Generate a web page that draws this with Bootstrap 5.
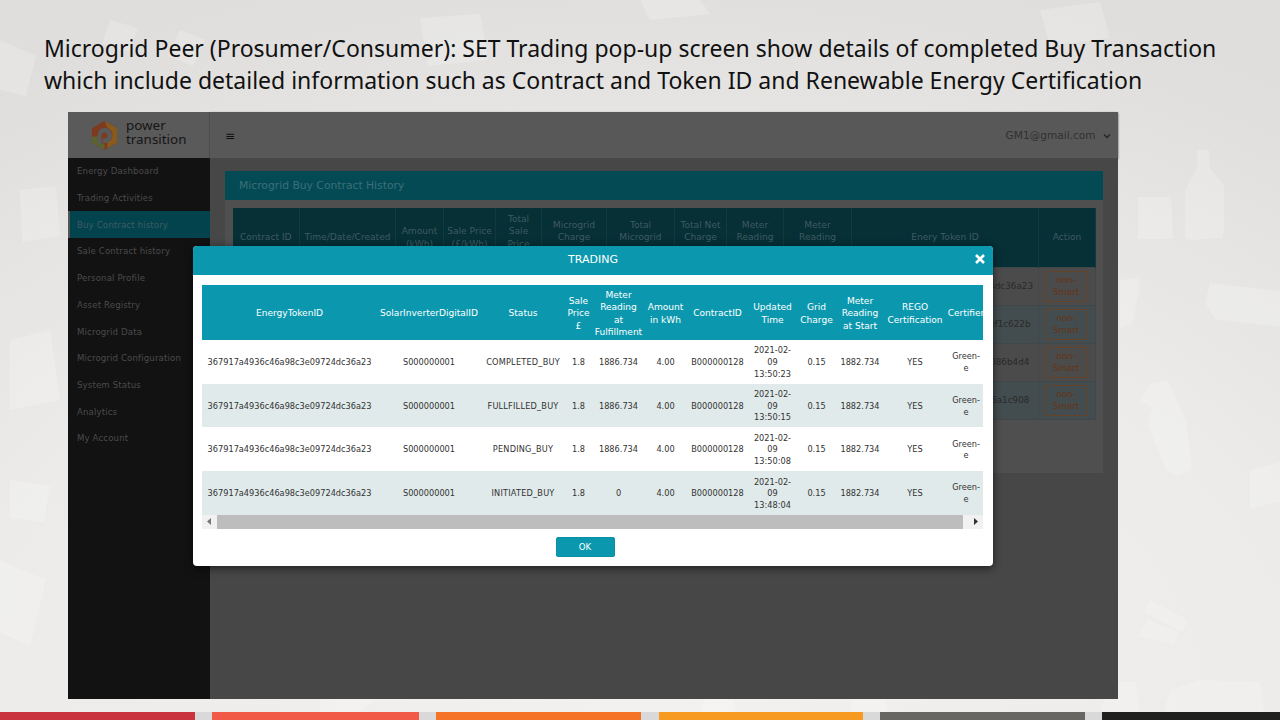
<!DOCTYPE html>
<html lang="en"><head><meta charset="utf-8"><title>Trading</title>
<link href="https://cdn.jsdelivr.net/npm/bootstrap@5.3.0/dist/css/bootstrap.min.css" rel="stylesheet">
<style>
html,body{height:100%}
body{width:1280px;height:720px;overflow:hidden;background:radial-gradient(ellipse 1150px 760px at 50% 100%,#f3f1f0 0%,#ecebe9 60%,#dfdedc 100%);font-family:"DejaVu Sans",sans-serif}
.slide{width:1280px;height:720px;position:relative;display:flex;flex-direction:column}
.deco{position:absolute;inset:0;width:1280px;height:720px}
.slide-title{position:relative;margin:32px 0 0 44px;height:67px;font-family:"Noto Sans",sans-serif;font-size:23px;line-height:32px;color:#111;white-space:nowrap}
.frame{position:relative;margin:13px 162px 0 68px;width:1050px;height:587px;display:flex;background:#474747}
.side{width:142px;flex:none;background:#121212;display:flex;flex-direction:column}
.side-logo{height:46px;background:#5a5a5a;display:flex;align-items:center;padding-left:22px;gap:7px;border-right:1px solid #525252}
.logo-txt{font-size:13.4px;line-height:14px;color:#151515;font-family:"Noto Sans",sans-serif;padding-bottom:6px}
.side-item{height:26.7px;display:flex;align-items:center;padding:1px 0 0 9px;font-size:8.6px;color:#4b4b4b;white-space:nowrap;letter-spacing:.13px}
.side-on{background:#03434d;color:#3f5c61;border-left:2px solid #555;padding-left:7px}
.bodycol{flex:1;display:flex;flex-direction:column;min-width:0}
.topbar{height:46px;background:#585858;display:flex;align-items:center;justify-content:space-between;padding:1px 7px 0 15px;font-size:10.6px;color:#313131;box-shadow:0 1px 2px #4a4a4a}
.burger{font-size:12px;color:#111}
.panel{margin:13px 15px 0 15px;height:302px;background:#4f4f4f}
.panel-bar{height:29px;background:#034a55;color:#3d6f78;font-size:10.75px;padding:1px 0 0 14px;display:flex;align-items:center}
.bg-wrap{margin:8px 8px 0 7px}
.bg-table{table-layout:fixed;width:863px;border-collapse:collapse;font-size:8.8px;color:#2a2a2a}
.bg-table th{background:#062f36;color:#3f5b60;font-weight:400;text-align:center;height:59px;padding:1px 2px 0;border-right:1px solid #0f3a40;line-height:12.6px;font-size:9.1px}
.bg-table td{height:38.2px;text-align:center;border:1px solid #40484a;padding:0 2px;background:#4b4b4b}
.bg-table tr:nth-child(even) td{background:#434d4f}
.nonsmart{display:block;margin:0 0 0 3px;width:44px;line-height:12px;font-size:8.8px;color:#663414;border:1px solid #65442a;border-radius:3px;padding:2px 0 3px}
.dlg{position:absolute;left:125px;top:134px;width:800px;height:320px;background:#fff;border-radius:4px;box-shadow:0 2px 8px rgba(0,0,0,.6);display:flex;flex-direction:column}
.dlg-head{height:29px;flex:none;background:#0b98ae;color:#fff;font-size:11px;display:flex;align-items:center;justify-content:center;position:relative;border-radius:4px 4px 0 0}
.dlg-x{position:absolute;right:7px;top:4px;width:12px;height:18px;display:flex;align-items:center}
.dlg-body{padding:10px 9px 0 9px;flex:1}
.tbl-clip{width:781px;overflow:hidden}
.trade{table-layout:fixed;width:783px;border-collapse:collapse;color:#333;margin:0}
.trade th{background:#0b98ae;color:#fff;font-weight:400;height:55px;text-align:center;padding:2px 3px 0;font-size:9.05px;line-height:12.4px}
.trade td{height:43.7px;text-align:center;padding:2px 0 0;line-height:11.6px;font-size:8.2px}
.trade tr:nth-child(even) td{background:#e0eaea}
.trade th.nw{white-space:nowrap;padding-left:0;padding-right:0}
.trade td.st{letter-spacing:.2px}
.trade td.ce{padding-left:4px;padding-right:4px}
.sbar{height:14px;display:flex;background:#f1f1f1;width:781px}
.sb-arrow{width:15px;display:flex;align-items:center;justify-content:center;flex:none}
.sb-thumb{width:746px;background:#bdbdbd}
.sb-rest{flex:1}
.dlg-foot{height:37px;flex:none;display:flex;justify-content:center;padding-top:8px}
.okbtn{width:59px;height:20px;padding:0;background:#0b98ae;border:1px solid #0a90a5;border-radius:2px;color:#fff;font-size:8.6px;line-height:18px;margin-left:-16px}
.stripes{position:absolute;left:0;top:712px;width:1280px;height:8px;display:flex;background:#d9d9d9;justify-content:space-between}
.stripe{height:8px}
</style></head><body>
<div class="slide">
<svg class="deco" viewBox="0 0 1280 720" aria-hidden="true"><g fill="#fff" opacity=".2">
<path d="M1197 150h12l1 18 14 18v44l-2 8-32 2-5-2v-48l12-22zM1138 197h33l2 42h-35zM1210 283l70 8v36l-65-8-10-16zM1150 384l18-4 4 10 14 30 6 50-14 6-12-6-18-44 4-18-12-8z"/>
<path d="M1150 600l38 20-6 12-38-20zM1148 620l30 12-4 12-36-8zM1170 690l30-10 60 2 4 30h-100zM1250 470l30-8v40l-30 6zM1120 280l18-2 2 10-8 36-12 4z"/>
<path d="M110 20l28 8-8 24-28-8zM180 30l25 10-12 26-25-10zM420 18l60-4 8 46-60 6zM640 0h60l10 14-60 6zM1040 10l60-8 10 36-60 8zM0 40l36 16-10 40-26-6z"/>
<path d="M10 340l40-10 10 70-50 10zM0 560l46 20-16 66-30-14zM10 480l40 6-6 36-34-4zM20 190l36-4 4 50-38 6z"/>
<path d="M320 700l30-16h40l-30 28h-40zM700 712l10-30 20 2 6 28zM850 712l6-30h24l8 30zM1100 712l10-30h26l4 30z"/></g></svg>
<div class="slide-title">Microgrid Peer (Prosumer/Consumer): SET Trading pop-up screen show details of completed Buy Transaction<br>which include detailed information such as Contract and Token ID and Renewable Energy Certification</div>
<div class="frame">
<aside class="side">
<div class="side-logo">
<svg width="29" height="31" viewBox="0 0 30 32"><path d="M15 1L28 8.500V23.500L15 31L2 23.500V8.500Z" fill="#7e3a1f"/><path d="M15 1L28 8.500V23.500L18 29V23a8 8 0 0 0 0-15z" fill="#8a5a1c"/><path d="M15 31L2 23.500V17h7v5l6 3z" fill="#5c6230"/><path d="M15 8a8 8 0 0 1 0 16h-2v-5h2a3 3 0 0 0 0-6 3 3 0 0 0-3 3v9H8V16a7.500 7.500 0 0 1 7-8z" fill="#5a5a5a"/></svg>
<div class="logo-txt">power<br>transition</div>
</div>
<div class="side-item">Energy Dashboard</div>
<div class="side-item">Trading Activities</div>
<div class="side-item side-on">Buy Contract history</div>
<div class="side-item">Sale Contract history</div>
<div class="side-item">Personal Profile</div>
<div class="side-item">Asset Registry</div>
<div class="side-item">Microgrid Data</div>
<div class="side-item">Microgrid Configuration</div>
<div class="side-item">System Status</div>
<div class="side-item">Analytics</div>
<div class="side-item">My Account</div>
</aside>
<div class="bodycol">
<header class="topbar"><span class="burger">≡</span><span>GM1@gmail.com <svg width="8" height="6" viewBox="0 0 8 6" class="ms-1"><path d="M1 1.500l3 3 3-3" fill="none" stroke="#262626" stroke-width="1.400"/></svg></span></header>
<section class="panel">
<div class="panel-bar">Microgrid Buy Contract History</div>
<div class="bg-wrap"><table class="bg-table">
<colgroup><col style="width:67px"><col style="width:96px"><col style="width:48px"><col style="width:52px"><col style="width:46px"><col style="width:65px"><col style="width:68px"><col style="width:52px"><col style="width:57px"><col style="width:68px"><col style="width:187px"><col style="width:57px"></colgroup>
<thead><tr><th>Contract ID</th><th>Time/Date/Created</th><th>Amount (kWh)</th><th>Sale Price (£/kWh)</th><th>Total<br>Sale<br>Price<br>(£)</th><th>Microgrid Charge (£/kWh)</th><th>Total Microgrid Charge</th><th>Total Net Charge (£)</th><th>Meter<br>Reading<br>at Start</th><th>Meter<br>Reading<br>at End</th><th>Enery Token ID</th><th>Action</th></tr></thead>
<tbody>
<tr><td colspan="10"></td><td>367917a4936c46a98c3e09724dc36a23</td><td><span class="nonsmart">non-Smart</span></td></tr>
<tr><td colspan="10"></td><td>2a71c0e94d3b86a5f07b19c3ef1c622b</td><td><span class="nonsmart">non-Smart</span></td></tr>
<tr><td colspan="10"></td><td>8e40b7d21fa3c96e5d17a02c086b4d4</td><td><span class="nonsmart">non-Smart</span></td></tr>
<tr><td colspan="10"></td><td>c15d93e7a0b84f26d7e3b1596a1c908</td><td><span class="nonsmart">non-Smart</span></td></tr>
</tbody></table></div>
</section>
</div>
<div class="dlg" role="dialog">
<div class="dlg-head">TRADING<span class="dlg-x"><svg width="12" height="12" viewBox="0 0 12 12"><path d="M2 2l8 8M10 2l-8 8" stroke="#fff" stroke-width="2.600"/></svg></span></div>
<div class="dlg-body">
<div class="tbl-clip"><table class="trade">
<colgroup><col style="width:175px"><col style="width:104px"><col style="width:84px"><col style="width:27px"><col style="width:53px"><col style="width:41px"><col style="width:63px"><col style="width:47px"><col style="width:41px"><col style="width:46px"><col style="width:64px"><col style="width:38px"></colgroup>
<thead><tr><th>EnergyTokenID</th><th class="nw">SolarInverterDigitalID</th><th>Status</th><th class="nw">Sale<br>Price<br>£</th><th class="nw">Meter<br>Reading<br>at<br>Fulfillment</th><th class="nw">Amount<br>in kWh</th><th>ContractID</th><th>Updated Time</th><th class="nw">Grid<br>Charge</th><th class="nw">Meter<br>Reading<br>at Start</th><th class="nw">REGO<br>Certification</th><th class="nw">Certifier</th></tr></thead>
<tbody>
<tr><td>367917a4936c46a98c3e09724dc36a23</td><td>S000000001</td><td class="st">COMPLETED_BUY</td><td>1.8</td><td>1886.734</td><td>4.00</td><td>B000000128</td><td>2021-02-09 13:50:23</td><td>0.15</td><td>1882.734</td><td>YES</td><td class="ce">Green-e</td></tr>
<tr><td>367917a4936c46a98c3e09724dc36a23</td><td>S000000001</td><td class="st">FULLFILLED_BUY</td><td>1.8</td><td>1886.734</td><td>4.00</td><td>B000000128</td><td>2021-02-09 13:50:15</td><td>0.15</td><td>1882.734</td><td>YES</td><td class="ce">Green-e</td></tr>
<tr><td>367917a4936c46a98c3e09724dc36a23</td><td>S000000001</td><td class="st">PENDING_BUY</td><td>1.8</td><td>1886.734</td><td>4.00</td><td>B000000128</td><td>2021-02-09 13:50:08</td><td>0.15</td><td>1882.734</td><td>YES</td><td class="ce">Green-e</td></tr>
<tr><td>367917a4936c46a98c3e09724dc36a23</td><td>S000000001</td><td class="st">INITIATED_BUY</td><td>1.8</td><td>0</td><td>4.00</td><td>B000000128</td><td>2021-02-09 13:48:04</td><td>0.15</td><td>1882.734</td><td>YES</td><td class="ce">Green-e</td></tr>
</tbody></table></div>
<div class="sbar"><span class="sb-arrow"><svg width="5" height="7" viewBox="0 0 5 7"><path d="M4 0v7L0 3.500z" fill="#777"/></svg></span><span class="sb-thumb"></span><span class="sb-rest"></span><span class="sb-arrow"><svg width="5" height="7" viewBox="0 0 5 7"><path d="M1 0v7l4-3.500z" fill="#333"/></svg></span></div>
</div>
<div class="dlg-foot"><button type="button" class="btn okbtn">OK</button></div>
</div>
</div>
<div class="stripes">
<div class="stripe" style="width:195px;background:#c9333d"></div>
<div class="stripe" style="width:207px;background:#f15a47"></div>
<div class="stripe" style="width:205px;background:#f47326"></div>
<div class="stripe" style="width:204px;background:#f69a21"></div>
<div class="stripe" style="width:205px;background:#676663"></div>
<div class="stripe" style="width:178px;background:#20201e"></div>
</div>
</div>
<script src="https://cdn.jsdelivr.net/npm/bootstrap@5.3.0/dist/js/bootstrap.bundle.min.js"></script>
</body></html>
